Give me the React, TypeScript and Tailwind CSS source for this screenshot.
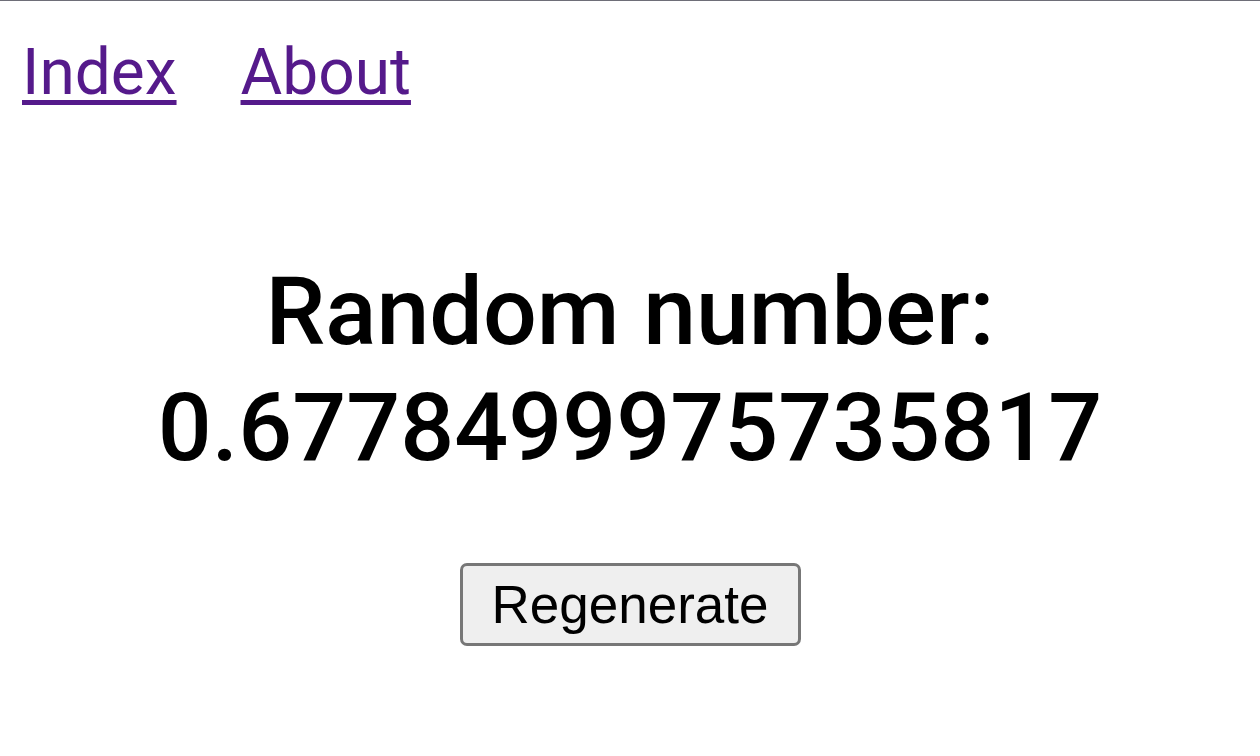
export default function App() {
  return (
    <div className="min-h-[756px] bg-white border-t border-[#6e6e78] font-['Roboto',sans-serif]">
      <nav className="flex gap-[64px] pl-[22px] pt-[34px] text-[64px] leading-[75px]">
        <a href="#" className="text-[#551a8b] underline decoration-[5px] underline-offset-[6px]">Index</a>
        <a href="#" className="text-[#551a8b] underline decoration-[5px] underline-offset-[6px]">About</a>
      </nav>
      <h1 className="mt-[144px] text-center text-[95px] leading-[116px] font-medium text-black">
        Random number: 0.6778499975735817
      </h1>
      <div className="flex justify-center mt-[77px]">
        <button className="h-[83px] w-[341px] rounded-[7px] border-[3px] border-[#777777] bg-[#efefef] text-[53px] leading-none text-black font-['Liberation_Sans',Arial,sans-serif]">
          Regenerate
        </button>
      </div>
    </div>
  );
}
